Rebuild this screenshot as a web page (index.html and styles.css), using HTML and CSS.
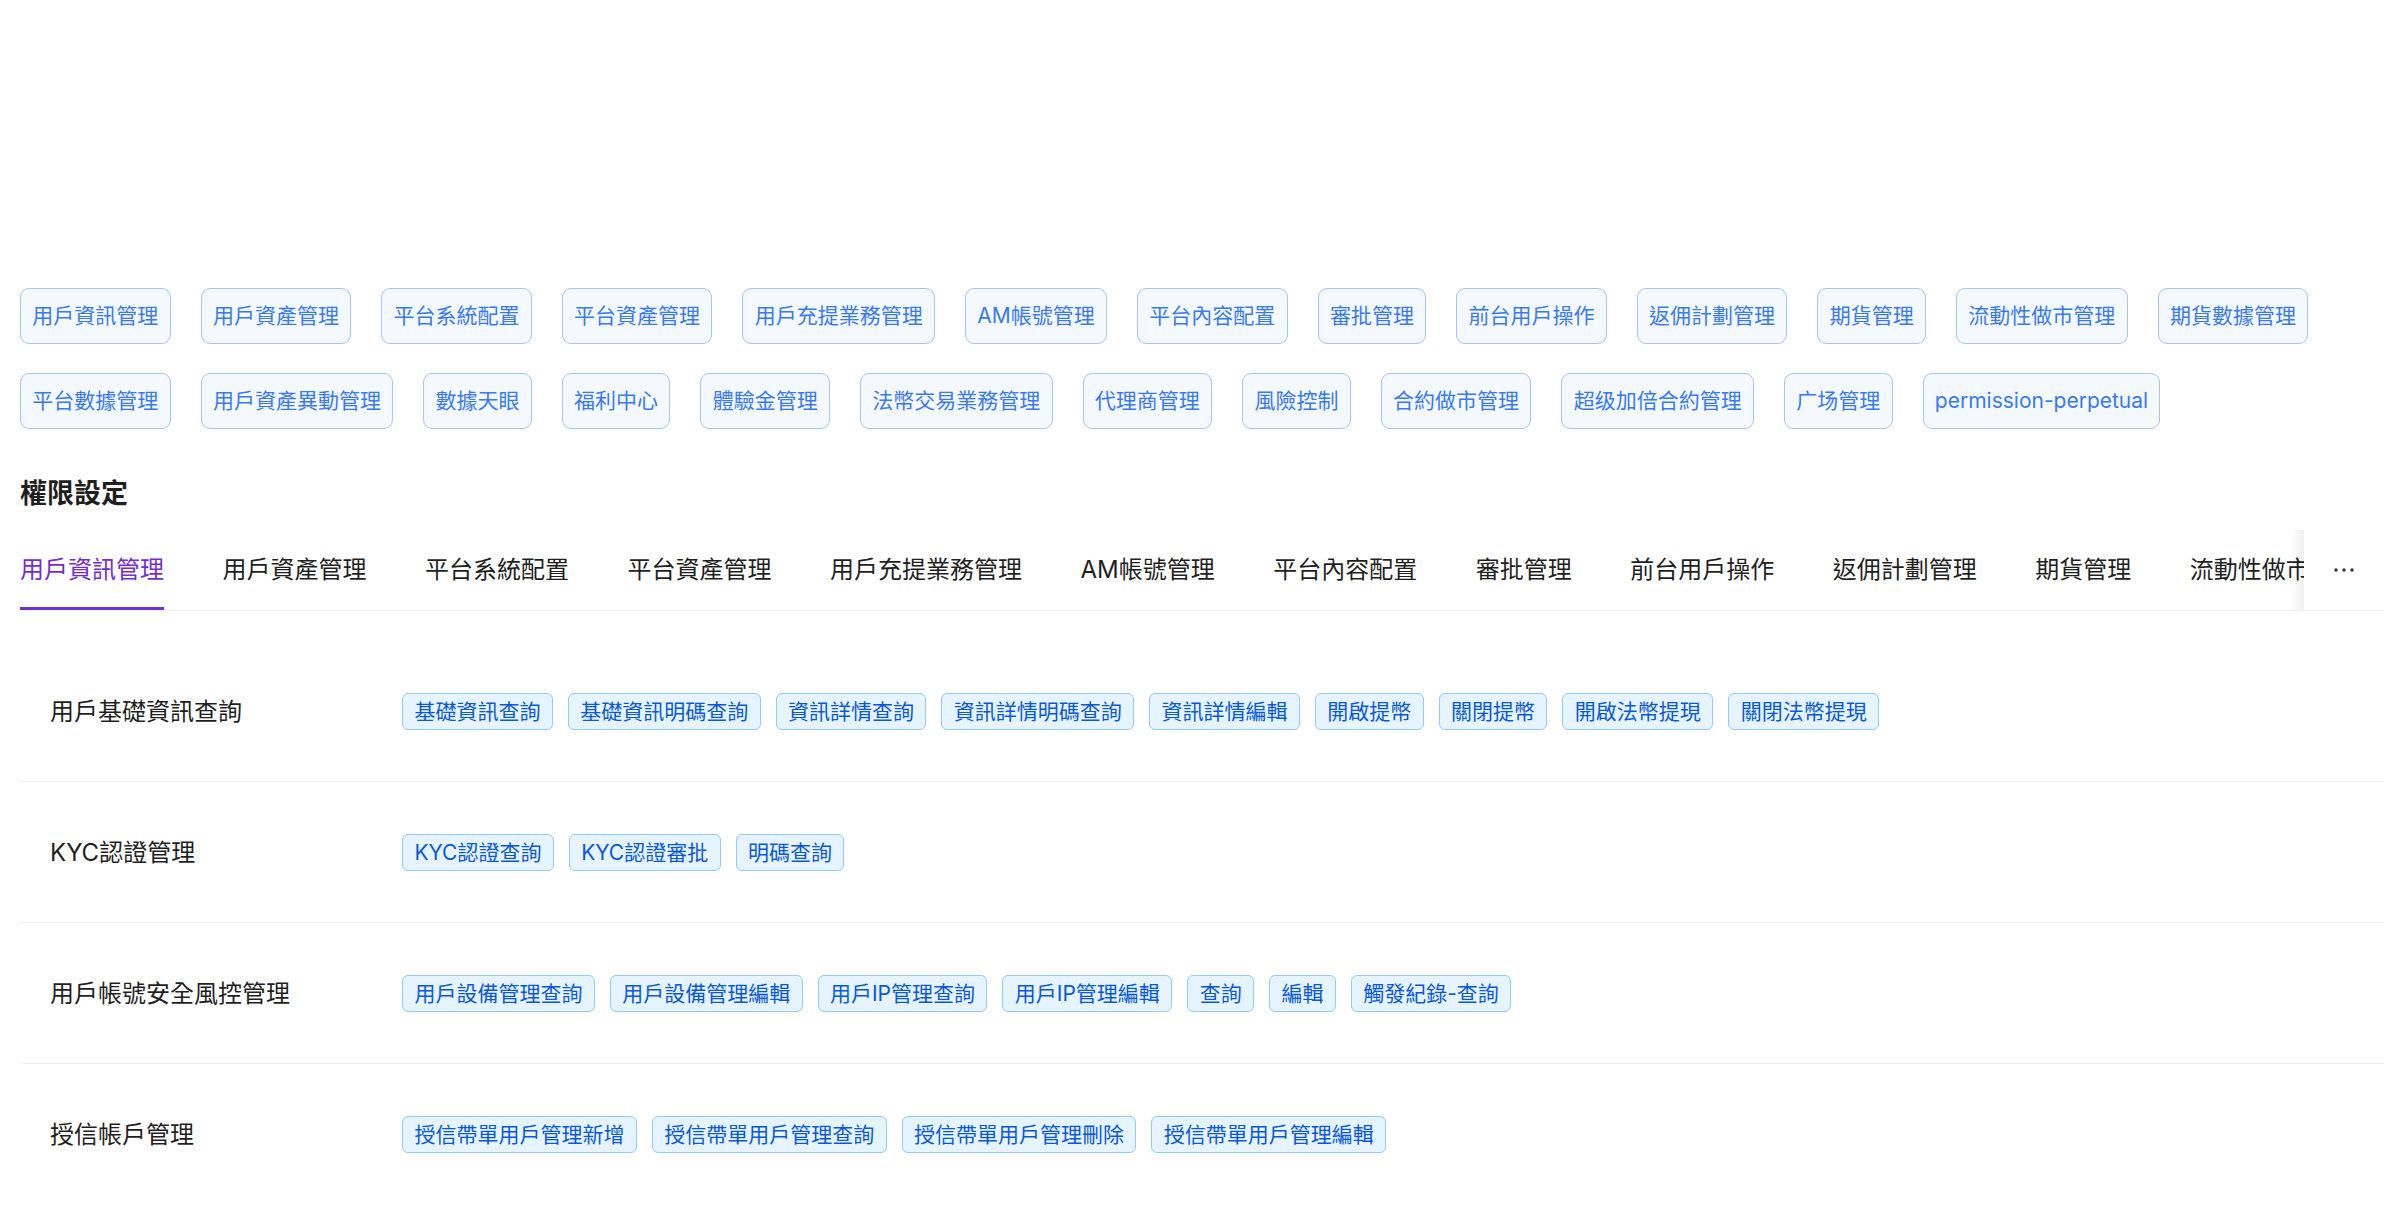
FILE: index.html
```html
<!DOCTYPE html>
<html lang="zh-Hant">
<head>
<meta charset="utf-8">
<title>權限設定</title>
<link rel="stylesheet" href="styles.css">
</head>
<body>
<div class="page">
  <div class="module-tags">
    <span class="mtag">用戶資訊管理</span>
    <span class="mtag">用戶資產管理</span>
    <span class="mtag">平台系統配置</span>
    <span class="mtag">平台資產管理</span>
    <span class="mtag">用戶充提業務管理</span>
    <span class="mtag">AM帳號管理</span>
    <span class="mtag">平台內容配置</span>
    <span class="mtag">審批管理</span>
    <span class="mtag">前台用戶操作</span>
    <span class="mtag">返佣計劃管理</span>
    <span class="mtag">期貨管理</span>
    <span class="mtag">流動性做市管理</span>
    <span class="mtag">期貨數據管理</span>
    <span class="mtag">平台數據管理</span>
    <span class="mtag">用戶資產異動管理</span>
    <span class="mtag">數據天眼</span>
    <span class="mtag">福利中心</span>
    <span class="mtag">體驗金管理</span>
    <span class="mtag">法幣交易業務管理</span>
    <span class="mtag">代理商管理</span>
    <span class="mtag">風險控制</span>
    <span class="mtag">合約做市管理</span>
    <span class="mtag">超级加倍合約管理</span>
    <span class="mtag">广场管理</span>
    <span class="mtag">permission-perpetual</span>
  </div>

  <h2 class="section-title">權限設定</h2>

  <div class="tabs">
    <div class="tabs-nav">
      <div class="tabs-wrap">
        <div class="tabs-list">
          <div class="tab active">用戶資訊管理</div>
          <div class="tab">用戶資產管理</div>
          <div class="tab">平台系統配置</div>
          <div class="tab">平台資產管理</div>
          <div class="tab">用戶充提業務管理</div>
          <div class="tab">AM帳號管理</div>
          <div class="tab">平台內容配置</div>
          <div class="tab">審批管理</div>
          <div class="tab">前台用戶操作</div>
          <div class="tab">返佣計劃管理</div>
          <div class="tab">期貨管理</div>
          <div class="tab">流動性做市管理</div>
          <div class="tab">期貨數據管理</div>
        </div>
      </div>
      <div class="tabs-more">
        <svg class="more-icon" viewBox="0 0 24 6" width="24" height="6" aria-hidden="true">
          <circle cx="4" cy="3" r="1.7"></circle>
          <circle cx="12" cy="3" r="1.7"></circle>
          <circle cx="20" cy="3" r="1.7"></circle>
        </svg>
      </div>
    </div>

    <div class="tab-pane">
      <div class="perm-row">
        <div class="perm-label">用戶基礎資訊查詢</div>
        <div class="perm-tags">
          <span class="ptag">基礎資訊查詢</span>
          <span class="ptag">基礎資訊明碼查詢</span>
          <span class="ptag">資訊詳情查詢</span>
          <span class="ptag">資訊詳情明碼查詢</span>
          <span class="ptag">資訊詳情編輯</span>
          <span class="ptag">開啟提幣</span>
          <span class="ptag">關閉提幣</span>
          <span class="ptag">開啟法幣提現</span>
          <span class="ptag">關閉法幣提現</span>
        </div>
      </div>
      <div class="perm-row">
        <div class="perm-label">KYC認證管理</div>
        <div class="perm-tags">
          <span class="ptag">KYC認證查詢</span>
          <span class="ptag">KYC認證審批</span>
          <span class="ptag">明碼查詢</span>
        </div>
      </div>
      <div class="perm-row">
        <div class="perm-label">用戶帳號安全風控管理</div>
        <div class="perm-tags">
          <span class="ptag">用戶設備管理查詢</span>
          <span class="ptag">用戶設備管理編輯</span>
          <span class="ptag">用戶IP管理查詢</span>
          <span class="ptag">用戶IP管理編輯</span>
          <span class="ptag">查詢</span>
          <span class="ptag">編輯</span>
          <span class="ptag">觸發紀錄-查詢</span>
        </div>
      </div>
      <div class="perm-row">
        <div class="perm-label">授信帳戶管理</div>
        <div class="perm-tags">
          <span class="ptag">授信帶單用戶管理新增</span>
          <span class="ptag">授信帶單用戶管理查詢</span>
          <span class="ptag">授信帶單用戶管理刪除</span>
          <span class="ptag">授信帶單用戶管理編輯</span>
        </div>
      </div>
    </div>
  </div>
</div>
</body>
</html>
```

FILE: styles.css
```css
* {
  box-sizing: border-box;
}

body {
  margin: 0;
  background: #ffffff;
  font-family: Inter, "Noto Sans CJK TC", sans-serif;
  color: #1f1f1f;
}

.page {
  padding: 288px 0 0 20px;
}

/* top module tags */
.module-tags {
  display: flex;
  flex-wrap: wrap;
  gap: 29px 30px;
  padding-right: 20px;
}

.mtag {
  height: 56px;
  line-height: 54px;
  padding: 0 11.3px;
  border: 1px solid #a6c4f6;
  background: #f4f8ff;
  color: #3a7aef;
  border-radius: 9px;
  font-size: 21px;
  white-space: nowrap;
}

.section-title {
  margin: 45px 0 0;
  font-size: 27px;
  line-height: 40px;
  font-weight: 700;
  color: #1f1f1f;
}

/* tabs */
.tabs {
  margin-top: 16px;
}

.tabs-nav {
  display: flex;
  border-bottom: 1px solid #f0f0f0;
}

.tabs-wrap {
  flex: 1;
  min-width: 0;
  overflow: hidden;
  position: relative;
}

.tabs-wrap::after {
  content: "";
  position: absolute;
  top: 0;
  right: 0;
  bottom: 0;
  width: 14px;
  background: linear-gradient(to right, rgba(0, 0, 0, 0), rgba(0, 0, 0, 0.06));
}

.tabs-list {
  display: flex;
  gap: 58.5px;
}

.tab {
  flex: none;
  position: relative;
  padding: 18px 0;
  line-height: 44px;
  font-size: 24px;
  color: #1f1f1f;
  white-space: nowrap;
}

.tab.active {
  color: #722ed1;
}

.tab.active::after {
  content: "";
  position: absolute;
  left: 0;
  right: 0;
  bottom: 0;
  height: 3px;
  background: #722ed1;
}

.tabs-more {
  flex: none;
  width: 80px;
  display: flex;
  align-items: center;
  justify-content: center;
}

.more-icon {
  fill: #333333;
  display: block;
}

/* permission rows */
.tab-pane {
  margin-top: 30px;
}

.perm-row {
  display: flex;
  align-items: center;
  padding: 52px 0 51px 30px;
  border-bottom: 1px solid #f0f0f0;
}

.perm-row:last-child {
  border-bottom: none;
}

.perm-label {
  flex: none;
  width: 352px;
  font-size: 24px;
  line-height: 37px;
  color: #1f1f1f;
}

.perm-tags {
  display: flex;
  flex-wrap: wrap;
  gap: 15px;
}

.ptag {
  height: 37px;
  line-height: 35px;
  padding: 0 11.4px;
  font-size: 21px;
  background: #e6f4ff;
  border: 1px solid #91caff;
  color: #0958d9;
  border-radius: 6px;
  white-space: nowrap;
}
```
